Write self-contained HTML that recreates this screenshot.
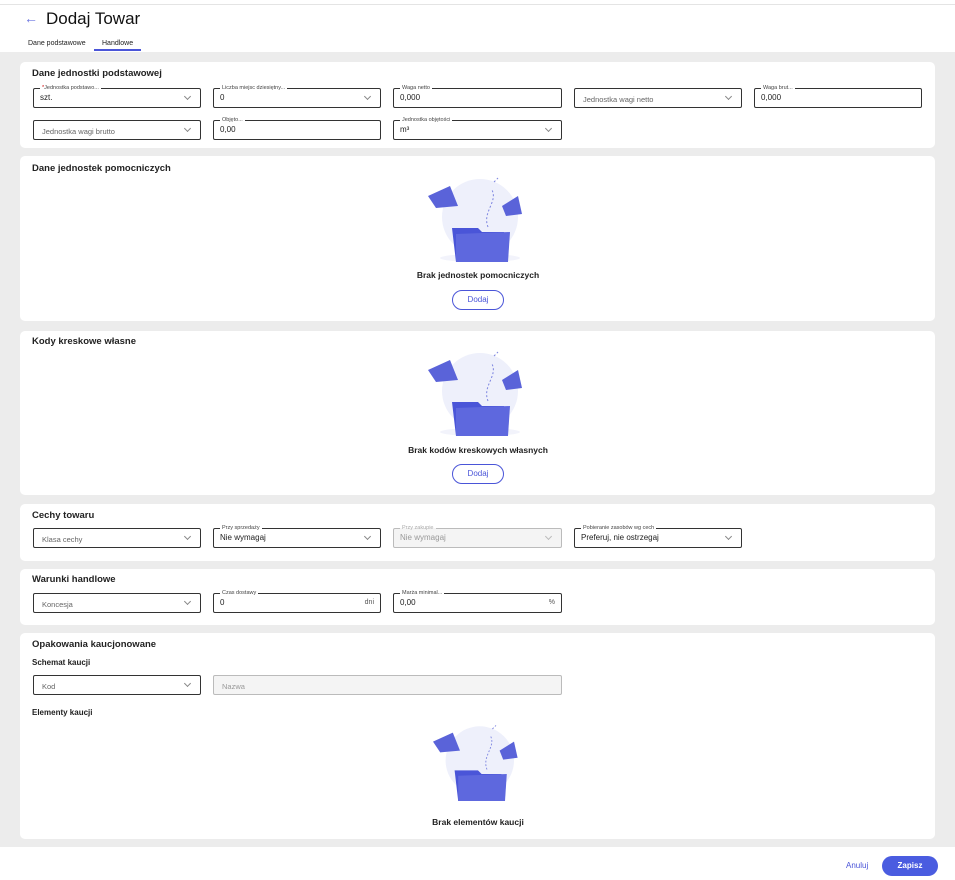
<!DOCTYPE html>
<html><head><meta charset="utf-8"><style>
*{box-sizing:border-box;margin:0;padding:0}
body{width:955px;height:880px;position:relative;background:#fff;font-family:"Liberation Sans",Arial,sans-serif;color:#222;overflow:hidden}
.abs{position:absolute}
.gray{position:absolute;left:0;top:52px;width:955px;height:795px;background:#ececec}
.card{position:absolute;left:20px;width:915px;background:#fff;border-radius:5px}
.h{position:absolute;left:12px;font-size:9.5px;font-weight:bold;color:#222}
.f{position:absolute;height:20px;border:1px solid #333;border-radius:2px;background:#fff;font-size:8px}
.f.dis{border-color:#bbb;background:#f4f4f4;color:#999}
.f .l{position:absolute;top:-5px;left:6px;background:#fff;padding:0 2px;font-size:5.5px;color:#444;line-height:8px}
.f.dis .l{color:#aaa;background:linear-gradient(#fff 50%,#f4f4f4 50%)}
.f .v{position:absolute;left:6px;top:4px;color:#222}
.f.dis .v{color:#999}
.f .p{position:absolute;left:8px;top:6px;color:#666;font-size:7.5px}
.f .c{position:absolute;right:10px;top:5px;width:5px;height:5px;border-right:1px solid #888;border-bottom:1px solid #888;transform:rotate(45deg)}
.f .s{position:absolute;right:6px;top:5px;color:#555;font-size:7px}
.em{position:absolute;text-align:center;font-size:8.5px;font-weight:bold;color:#222}
.btn{position:absolute;width:52px;height:20px;border:1px solid #4a55d8;border-radius:10px;color:#4a55d8;font-size:8px;text-align:center;line-height:18px}
</style></head><body>
<div class="abs" style="left:0;top:4px;width:955px;height:1px;background:#e4e4e4"></div>
<div class="abs" style="left:24px;top:10px;color:#6a74e0;font-size:14px">&#8592;</div>
<div class="abs" style="left:46px;top:9px;font-size:17px;color:#111">Dodaj Towar</div>
<div class="abs" style="left:28px;top:40px;font-size:7px">Dane podstawowe</div>
<div class="abs" style="left:102px;top:40px;font-size:7px">Handlowe</div>
<div class="abs" style="left:94px;top:49px;width:47px;height:2px;background:#4a55d8"></div>
<div class="gray"></div>

<div class="card" style="top:62px;height:86px"><div class="h" style="top:6px">Dane jednostki podstawowej</div></div>
<div class="f" style="left:33px;top:88px;width:168px"><span class="l"><span style="color:#c00">*</span>Jednostka podstawo...</span><span class="v">szt.</span><span class="c"></span></div>
<div class="f" style="left:213px;top:88px;width:168px"><span class="l">Liczba miejsc dziesiętny...</span><span class="v">0</span><span class="c"></span></div>
<div class="f" style="left:393px;top:88px;width:169px"><span class="l">Waga netto</span><span class="v">0,000</span></div>
<div class="f" style="left:574px;top:88px;width:168px"><span class="p">Jednostka wagi netto</span><span class="c"></span></div>
<div class="f" style="left:754px;top:88px;width:168px"><span class="l">Waga brut...</span><span class="v">0,000</span></div>
<div class="f" style="left:33px;top:120px;width:168px"><span class="p">Jednostka wagi brutto</span><span class="c"></span></div>
<div class="f" style="left:213px;top:120px;width:168px"><span class="l">Objęto...</span><span class="v">0,00</span></div>
<div class="f" style="left:393px;top:120px;width:169px"><span class="l">Jednostka objętości</span><span class="v">m³</span><span class="c"></span></div>

<div class="card" style="top:156px;height:165px"><div class="h" style="top:7px">Dane jednostek pomocniczych</div></div>
<svg class="abs" style="left:418px;top:172px" width="120" height="100" viewBox="0 0 120 100"><circle cx="62" cy="45" r="38" fill="#eef0fb"/><ellipse cx="62" cy="86" rx="40" ry="4" fill="#f2f3fb"/><path d="M10 24 L32 14 L40 34 L18 36Z" fill="#5a63d9"/><path d="M84 34 L100 24 L104 42 L88 44Z" fill="#5a63d9"/><path d="M70 55 C64 40 80 30 74 18 M76 10 l4 -4" stroke="#7c84e0" stroke-dasharray="2 2" fill="none"/><path d="M34 56 L60 56 L64 60 L86 60 L90 90 L38 90Z" fill="#4a55d8"/><path d="M38 62 L92 60 L90 90 L38 90Z" fill="#5e68de"/></svg>
<div class="em" style="left:378px;top:270px;width:200px">Brak jednostek pomocniczych</div>
<div class="btn" style="left:452px;top:290px">Dodaj</div>

<div class="card" style="top:331px;height:164px"><div class="h" style="top:5px">Kody kreskowe własne</div></div>
<svg class="abs" style="left:418px;top:346px" width="120" height="100" viewBox="0 0 120 100"><circle cx="62" cy="45" r="38" fill="#eef0fb"/><ellipse cx="62" cy="86" rx="40" ry="4" fill="#f2f3fb"/><path d="M10 24 L32 14 L40 34 L18 36Z" fill="#5a63d9"/><path d="M84 34 L100 24 L104 42 L88 44Z" fill="#5a63d9"/><path d="M70 55 C64 40 80 30 74 18 M76 10 l4 -4" stroke="#7c84e0" stroke-dasharray="2 2" fill="none"/><path d="M34 56 L60 56 L64 60 L86 60 L90 90 L38 90Z" fill="#4a55d8"/><path d="M38 62 L92 60 L90 90 L38 90Z" fill="#5e68de"/></svg>
<div class="em" style="left:378px;top:445px;width:200px">Brak kodów kreskowych własnych</div>
<div class="btn" style="left:452px;top:464px">Dodaj</div>

<div class="card" style="top:504px;height:57px"><div class="h" style="top:6px">Cechy towaru</div></div>
<div class="f" style="left:33px;top:528px;width:168px"><span class="p">Klasa cechy</span><span class="c"></span></div>
<div class="f" style="left:213px;top:528px;width:168px"><span class="l">Przy sprzedaży</span><span class="v">Nie wymagaj</span><span class="c"></span></div>
<div class="f dis" style="left:393px;top:528px;width:169px"><span class="l">Przy zakupie</span><span class="v">Nie wymagaj</span><span class="c" style="border-color:#bbb"></span></div>
<div class="f" style="left:574px;top:528px;width:168px"><span class="l">Pobieranie zasobów wg cech</span><span class="v">Preferuj, nie ostrzegaj</span><span class="c"></span></div>

<div class="card" style="top:569px;height:56px"><div class="h" style="top:5px">Warunki handlowe</div></div>
<div class="f" style="left:33px;top:593px;width:168px"><span class="p">Koncesja</span><span class="c"></span></div>
<div class="f" style="left:213px;top:593px;width:168px"><span class="l">Czas dostawy</span><span class="v">0</span><span class="s">dni</span></div>
<div class="f" style="left:393px;top:593px;width:169px"><span class="l">Marża minimal...</span><span class="v">0,00</span><span class="s">%</span></div>

<div class="card" style="top:633px;height:206px"><div class="h" style="top:6px">Opakowania kaucjonowane</div><div class="h" style="top:25px;font-size:8px">Schemat kaucji</div><div class="h" style="top:75px;font-size:8px">Elementy kaucji</div></div>
<div class="f" style="left:33px;top:675px;width:168px"><span class="p">Kod</span><span class="c"></span></div>
<div class="f dis" style="left:213px;top:675px;width:349px"><span class="p" style="color:#999">Nazwa</span></div>
<svg class="abs" style="left:418px;top:720px" width="120" height="90" viewBox="0 0 120 100"><circle cx="62" cy="45" r="38" fill="#eef0fb"/><path d="M10 24 L32 14 L40 34 L18 36Z" fill="#5a63d9"/><path d="M84 34 L100 24 L104 42 L88 44Z" fill="#5a63d9"/><path d="M70 55 C64 40 80 30 74 18 M76 10 l4 -4" stroke="#7c84e0" stroke-dasharray="2 2" fill="none"/><path d="M34 56 L60 56 L64 60 L86 60 L90 90 L38 90Z" fill="#4a55d8"/><path d="M38 62 L92 60 L90 90 L38 90Z" fill="#5e68de"/></svg>
<div class="em" style="left:378px;top:817px;width:200px">Brak elementów kaucji</div>

<div class="abs" style="left:846px;top:861px;font-size:8px;color:#4a55d8">Anuluj</div>
<div class="abs" style="left:882px;top:856px;width:56px;height:20px;border-radius:10px;background:#4a5ce0;color:#fff;font-size:8px;font-weight:bold;text-align:center;line-height:20px">Zapisz</div>
</body></html>
